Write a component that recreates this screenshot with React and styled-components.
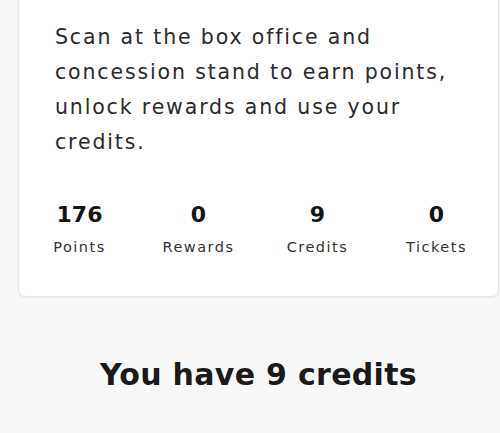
import React from 'react';
import styled, { createGlobalStyle } from 'styled-components';

/**
 * Loyalty summary - card with the scan hint and the four counters,
 *  followed by the credits heading
 */

const stats = [
  { value: 176, label: 'Points' },
  { value: 0, label: 'Rewards' },
  { value: 9, label: 'Credits' },
  { value: 0, label: 'Tickets' }
];

const credits = stats.find((s) => s.label === 'Credits').value;

const App = () => (
  <>
    <GlobalStyle />
    <StyledPage>
      <StyledCard>
        <StyledIntro>
          Scan at the box office and concession stand to earn points, unlock
          rewards and use your credits.
        </StyledIntro>
        <StyledStats>
          {stats.map((stat) => (
            <StyledStat key={stat.label}>
              <StyledValue>{stat.value}</StyledValue>
              <StyledLabel>{stat.label}</StyledLabel>
            </StyledStat>
          ))}
        </StyledStats>
      </StyledCard>
      <StyledHeading>You have {credits} credits</StyledHeading>
    </StyledPage>
  </>
);

const GlobalStyle = createGlobalStyle`
  body {
    margin: 0;
    background: #f8f8f8;
    font-family: 'DejaVu Sans', 'Liberation Sans', sans-serif;
    color: #1f1f1f;
  }
`;

const StyledPage = styled('div')({
  padding: '0 1px 0 18px',
  overflow: 'hidden'
});

const StyledCard = styled('section')({
  marginTop: '-20px',
  background: '#fff',
  border: '1px solid #e6e6e6',
  borderRadius: '7px',
  boxShadow: '0 1px 2px rgba(0, 0, 0, 0.06)',
  padding: '39px 0 40px'
});

const StyledIntro = styled('p')({
  margin: '0 28px 0 36px',
  fontSize: '20.5px',
  lineHeight: '35px',
  letterSpacing: '1.85px',
  color: '#2b2b2b'
});

const StyledStats = styled('div')({
  display: 'grid',
  gridTemplateColumns: 'repeat(4, 1fr)',
  marginTop: '42px',
  padding: '0 2px 0 1px'
});

const StyledStat = styled('div')({
  display: 'flex',
  flexDirection: 'column',
  alignItems: 'center',
  gap: '10px'
});

const StyledValue = styled('span')({
  fontSize: '22px',
  fontWeight: 700,
  lineHeight: '26px',
  color: '#141414'
});

const StyledLabel = styled('span')({
  fontSize: '14.5px',
  lineHeight: '18px',
  letterSpacing: '1.5px',
  color: '#333'
});

const StyledHeading = styled('h1')({
  margin: '60px 0 0',
  textAlign: 'center',
  fontSize: '30px',
  fontWeight: 700,
  letterSpacing: '0.3px',
  color: '#1a1a1a'
});

export default App;
